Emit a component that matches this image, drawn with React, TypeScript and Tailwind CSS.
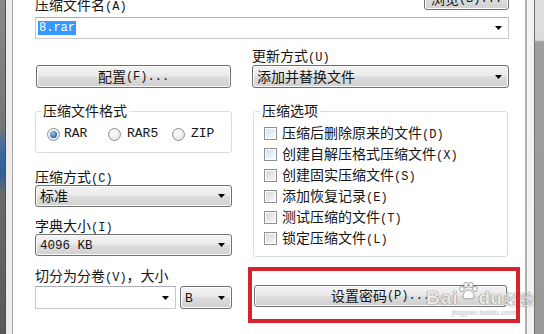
import type { ReactNode } from 'react';
import clsx from 'clsx';

const btnBg =
  'rounded-[3px] border border-[#707070] bg-[linear-gradient(to_bottom,#f3f3f3,#ebebeb_45%,#dddddd_52%,#d0d0d0)] shadow-[inset_0_0_0_1px_#fbfbfb]';

function M({ children }: { children: ReactNode }) {
  return <span className="font-['Liberation_Mono','Noto_Sans_CJK_SC',monospace] text-[12px]">{children}</span>;
}

function Arrow() {
  return (
    <svg width="7" height="4" viewBox="0 0 7 4" className="shrink-0">
      <path d="M0 0h7L3.5 4z" fill="#000" />
    </svg>
  );
}

function Button({ className, children }: { className?: string; children: ReactNode }) {
  return <div className={clsx('flex items-center justify-center leading-[14px]', btnBg, className)}>{children}</div>;
}

function Combo({ className, children }: { className?: string; children?: ReactNode }) {
  return (
    <div className={clsx('flex items-center justify-between pl-[4px] pr-[6px] leading-[14px]', btnBg, className)}>
      <span>{children}</span>
      <Arrow />
    </div>
  );
}

function EditCombo({ className, children }: { className?: string; children?: ReactNode }) {
  return (
    <div
      className={clsx(
        'flex items-center justify-between border border-[#c5cad2] border-t-[#abadb3] bg-white pl-[2px] pr-[6px]',
        className,
      )}
    >
      <span className="flex">{children}</span>
      <Arrow />
    </div>
  );
}

function Label({ className, children }: { className?: string; children: ReactNode }) {
  return <div className={clsx('h-[14px] leading-[14px] whitespace-nowrap', className)}>{children}</div>;
}

function Radio({ on }: { on?: boolean }) {
  return (
    <span className="flex h-[13px] w-[13px] shrink-0 items-center justify-center rounded-full border border-[#8c8f94] bg-[radial-gradient(circle_at_40%_35%,#ffffff,#dcdcdc)]">
      {on && (
        <span className="h-[7px] w-[7px] rounded-full bg-[radial-gradient(circle_at_40%_35%,#9cc8f0,#2a63a3_70%,#1c4a80)]" />
      )}
    </span>
  );
}

function Check({ blue }: { blue?: boolean }) {
  return (
    <span className="flex h-[13px] w-[13px] shrink-0 items-center justify-center border border-[#8e8f8f] bg-white">
      <span
        className={clsx(
          'h-[9px] w-[9px]',
          blue
            ? 'bg-[linear-gradient(135deg,#cfe3f2,#f4f9fd)]'
            : 'bg-[linear-gradient(135deg,#d8d8d8,#f6f6f6)]',
        )}
      />
    </span>
  );
}

const options: [string, string, boolean][] = [
  ['压缩后删除原来的文件', '(D)', true],
  ['创建自解压格式压缩文件', '(X)', true],
  ['创建固实压缩文件', '(S)', false],
  ['添加恢复记录', '(E)', false],
  ['测试压缩的文件', '(T)', false],
  ['锁定压缩文件', '(L)', false],
];

export default function App() {
  return (
    <div className="flex h-[334px] w-[544px] overflow-hidden bg-white font-['Liberation_Sans','Noto_Sans_CJK_SC',sans-serif] text-[14px] text-[#141414]">
      {/* left window edge */}
      <div className="flex w-[13px] shrink-0">
        <div className="w-[5px] bg-[linear-gradient(to_bottom,#8a8a8a,#767676_38%,#3c6aa2_45%,#2f5e95_52%,#6a6a6a_58%,#595959)]" />
        <div className="w-px bg-[#4e4e4e]" />
        <div className="w-[6px] bg-[#ededed]" />
        <div className="w-px bg-[#a6a6a6]" />
      </div>

      <div className="relative flex-1 pl-[22px] pr-[16px]">
        <div className="-mt-[13px]">
          <div className="flex h-[23px] items-start justify-between">
            <Label className="mt-[11px]">
              压缩文件名<M>(A)</M>
            </Label>
            <Button className="h-[23px] w-[85px]">
              浏览<M>(B)...</M>
            </Button>
          </div>

          <EditCombo className="mt-[7px] h-[22px]">
            <span className="bg-[#3399ff] px-px font-['Liberation_Mono',monospace] text-[12px] leading-[14px] text-white">
              8.rar
            </span>
          </EditCombo>

          <div className="grid grid-cols-[197px_257px] gap-x-[20px]">
            {/* left column */}
            <div className="flex flex-col">
              <Button className="mx-px mt-[26px] h-[23px]">
                配置<M>(F)...</M>
              </Button>

              <fieldset className="mt-[14px] rounded-[3px] border border-[#d5dfe5] px-[5px] pt-[7px] pb-[11px]">
                <legend className="px-[2px] leading-[18px]">压缩文件格式</legend>
                <div className="flex h-[14px] items-center pl-[6px] font-['Liberation_Mono',monospace] text-[13px]">
                  <div className="flex w-[61px] items-center gap-[4px]">
                    <Radio on />
                    RAR
                  </div>
                  <div className="flex w-[64px] items-center gap-[6px]">
                    <Radio />
                    RAR5
                  </div>
                  <div className="flex items-center gap-[6px]">
                    <Radio />
                    ZIP
                  </div>
                </div>
              </fieldset>

              <Label className="mt-[17px]">
                压缩方式<M>(C)</M>
              </Label>
              <Combo className="mt-px h-[22px]">标准</Combo>

              <Label className="mt-[12px]">
                字典大小<M>(I)</M>
              </Label>
              <Combo className="mt-px h-[22px]">
                <span className="font-['Liberation_Mono',monospace] text-[12.5px]">4096 KB</span>
              </Combo>

              <Label className="mt-[13px]">
                切分为分卷<M>(V)</M>，大小
              </Label>
              <div className="mt-[3px] flex gap-[4px]">
                <EditCombo className="h-[23px] w-[141px]" />
                <Combo className="h-[23px] flex-1">
                  <span className="font-['Liberation_Mono',monospace] text-[13px]">B</span>
                </Combo>
              </div>
            </div>

            {/* right column */}
            <div className="flex flex-col">
              <Label className="mt-[10px]">
                更新方式<M>(U)</M>
              </Label>
              <Combo className="mt-[2px] h-[23px]">添加并替换文件</Combo>

              <fieldset className="mt-[14px] mx-px rounded-[3px] border border-[#d5dfe5] px-[6px] pt-[3px] pb-[7px]">
                <legend className="px-[2px] leading-[18px]">压缩选项</legend>
                <div className="flex flex-col pl-[4px]">
                  {options.map(([t, k, blue]) => (
                    <div key={t} className="flex h-[21px] items-center gap-[5px] whitespace-nowrap leading-[14px]">
                      <Check blue={blue} />
                      <span>
                        {t}
                        <M>{k}</M>
                      </span>
                    </div>
                  ))}
                </div>
              </fieldset>

              <div className="relative mx-[2px] mt-[28px]">
                <Button className="h-[22px]">
                  设置密码<M>(P)...</M>
                </Button>
                {/* baidu watermark */}
                <div className="absolute top-[-4px] left-[172px] flex flex-col items-start whitespace-nowrap text-white/85">
                  <div className="flex items-end leading-none [text-shadow:0_0_1px_#6f6f6f,0_0_1px_#6f6f6f]">
                    <span className="font-['Liberation_Sans',sans-serif] text-[19px] font-bold tracking-[1px]">Bai</span>
                    <svg width="22" height="20" viewBox="0 0 22 20" className="mb-[6px] -mr-[20px] -ml-[2px]">
                      <g fill="#ffffff" fillOpacity="0.85" stroke="#8a8a8a" strokeWidth="0.8">
                        <ellipse cx="5" cy="8" rx="2.2" ry="2.8" />
                        <ellipse cx="9" cy="4" rx="2.2" ry="2.8" />
                        <ellipse cx="14" cy="4" rx="2.2" ry="2.8" />
                        <ellipse cx="18" cy="8" rx="2.2" ry="2.8" />
                        <path d="M11.5 9c3 0 6 4 5.5 7-.4 2-3 2-5.5 1.6C9 18 6.4 18 6 16c-.5-3 2.5-7 5.5-7z" />
                      </g>
                    </svg>
                    <span className="ml-[20px] font-['Liberation_Sans',sans-serif] text-[19px] font-bold">du</span>
                    <span className="ml-[2px] text-[15px]">经验</span>
                  </div>
                  <span className="mt-[2px] ml-[26px] font-['Liberation_Sans',sans-serif] text-[8px] leading-none text-[#e8e8e8] [text-shadow:0_0_1px_#9a9a9a]">
                    jingyan.baidu.com
                  </span>
                </div>
                {/* red highlight */}
                <div className="pointer-events-none absolute -top-[18px] -right-[13px] -bottom-[16px] -left-[6px] border-4 border-[#d8232c]" />
              </div>
            </div>
          </div>
        </div>
      </div>

      {/* right window edge */}
      <div className="flex w-[19px] shrink-0">
        <div className="w-[2px] bg-[#b0b0b0]" />
        <div className="w-[7px] bg-[#f2f2f2]" />
        <div className="w-px bg-[#707070]" />
        <div className="w-[9px] bg-[linear-gradient(to_bottom,#dedede_0,#dcdcdc_40px,#9e9e9e_42px,#9a9a9a)]" />
      </div>
    </div>
  );
}
